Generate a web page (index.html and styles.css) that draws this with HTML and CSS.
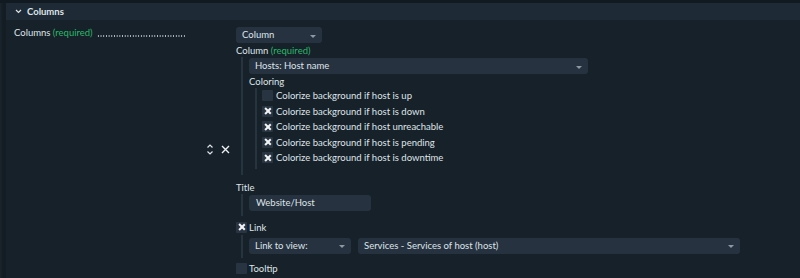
FILE: index.html
```html
<!DOCTYPE html>
<html>
<head>
<meta charset="utf-8">
<link rel="stylesheet" href="styles.css">
</head>
<body>
<div class="page">
  <div class="edge"></div>
  <div class="main">
    <div class="topband"></div>
    <div class="header">
      <svg class="chev" width="7" height="5" viewBox="0 0 7 5"><path d="M1 1 L3.5 3.5 L6 1" fill="none" stroke="#dfe4e8" stroke-width="1.2"/></svg>
      <span class="htitle">Columns</span>
    </div>
    <div class="content">
      <div class="label"><span>Columns <span class="req">(required)</span></span><span class="dots"></span></div>
      <div class="right">
        <div class="select sel-column"><span>Column</span><i class="arrow"></i></div>
        <div class="entryrow">
          <div class="icons">
            <svg width="8" height="11" viewBox="0 0 8 11"><path d="M1.5 3.5 L4 1 L6.5 3.5 M1.5 7.5 L4 10 L6.5 7.5" fill="none" stroke="#dfe4e8" stroke-width="1.2"/></svg>
            <svg width="9" height="9" viewBox="0 0 9 9"><path d="M1 1 L8 8 M8 1 L1 8" fill="none" stroke="#eef1f3" stroke-width="1.4"/></svg>
          </div>
          <div class="entry">
            <div class="title">Column <span class="req">(required)</span></div>
            <div class="block b1">
              <div class="select sel-hosts"><span>Hosts: Host name</span><i class="arrow"></i></div>
              <div class="sub">Coloring</div>
              <div class="block b2">
                <div class="cbrow"><span class="cb"></span>Colorize background if host is up</div>
                <div class="cbrow"><span class="cb on"></span>Colorize background if host is down</div>
                <div class="cbrow"><span class="cb on"></span>Colorize background if host unreachable</div>
                <div class="cbrow"><span class="cb on"></span>Colorize background if host is pending</div>
                <div class="cbrow"><span class="cb on"></span>Colorize background if host is downtime</div>
              </div>
            </div>
            <div class="title t2">Title</div>
            <div class="block b3">
              <div class="input">Website/Host</div>
            </div>
            <div class="cbline t3"><span class="cb on"></span>Link</div>
            <div class="block b4">
              <div class="select sel-link"><span>Link to view:</span><i class="arrow"></i></div>
              <div class="select sel-view"><span>Services - Services of host (host)</span><i class="arrow"></i></div>
            </div>
            <div class="cbline t4"><span class="cb"></span>Tooltip</div>
          </div>
        </div>
      </div>
    </div>
  </div>
</div>
</body>
</html>
```

FILE: styles.css
```css
* { box-sizing: border-box; }
html, body { margin: 0; padding: 0; }
body {
  background: #17212a;
  font-family: Lato, "Noto Sans", sans-serif;
  font-size: 9.5px;
  color: #dfe4e8;
  width: 800px;
  height: 278px;
  overflow: hidden;
}
.page { display: flex; height: 278px; }
.edge {
  width: 6px;
  flex: none;
  background: linear-gradient(to right, #1a252e 0, #131c23 3px, #141d24 6px);
}
.main { flex: 1; display: flex; flex-direction: column; }
.topband { height: 3px; background: #111a21; margin-left: -6px; }
.header {
  height: 17px;
  background: #1e2b36;
  display: flex;
  align-items: center;
  padding-left: 9px;
}
.chev { margin-right: 5px; }
.htitle { font-weight: bold; font-size: 9.5px; }
.content { display: flex; padding-top: 6px; }
.label {
  width: 172px;
  flex: none;
  margin-left: 8px;
  margin-right: 14px;
  line-height: 13px;
  height: 13px;
  white-space: nowrap;
  display: flex;
}
.req { color: #27b868; }
.dots {
  flex: 1;
  margin-left: 4px;
  height: 13px;
  background-image: radial-gradient(circle, #b9c1c8 0.55px, transparent 0.8px);
  background-size: 2.7px 2px;
  background-repeat: repeat-x;
  background-position: 0 9px;
}
.right { display: flex; flex-direction: column; }
.select {
  height: 16px;
  background: #263240;
  border-radius: 3px;
  display: flex;
  align-items: center;
  justify-content: space-between;
  padding: 0 6px;
  line-height: 16px;
}
.arrow {
  width: 0; height: 0;
  border-left: 3px solid transparent;
  border-right: 3px solid transparent;
  border-top: 3px solid #8d98a4;
  margin-top: 2px;
}
.sel-column { width: 86px; margin-left: 36px; margin-top: 1px; }
.entryrow { display: flex; }
.icons {
  width: 36px;
  flex: none;
  display: flex;
  align-items: center;
  gap: 7px;
  padding-left: 6px;
  padding-top: 101px;
  align-self: flex-start;
}
.entry { display: flex; flex-direction: column; }
.title { line-height: 13px; margin-top: 1px; }
.block {
  margin-left: 5px;
  border-left: 2px solid #27333f;
  padding-left: 6px;
}
.b1 { padding-top: 1px; padding-bottom: 6px; }
.sel-hosts { width: 339px; }
.sub { line-height: 12px; margin-top: 2px; }
.b2 { margin-left: 6px; padding-left: 5px; padding-bottom: 3px; }
.cbrow { height: 15.5px; display: flex; align-items: center; white-space: nowrap; }
.cb {
  width: 11px; height: 11px;
  background: #283441;
  border-radius: 1px;
  margin-right: 3px;
  flex: none;
  position: relative;
}
.cb.on::before, .cb.on::after {
  content: "";
  position: absolute;
  left: 5px; top: 1.5px;
  width: 1.6px; height: 8px;
  background: #f1f3f5;
  transform: rotate(45deg);
}
.cb.on::after { transform: rotate(-45deg); }
.t2 { margin-top: 6px; }
.b3 { padding-top: 1px; padding-bottom: 5px; }
.input {
  width: 122px; height: 16px;
  background: #263240;
  border-radius: 3px;
  padding-left: 7px;
  line-height: 16px;
}
.cbline { display: flex; align-items: center; height: 13px; }
.cbline .cb { margin-right: 2px; }
.t3 { margin-top: 5px; }
.b4 { display: flex; gap: 7px; padding-top: 3px; padding-bottom: 4px; margin-top: 1px; }
.sel-link { width: 102px; }
.sel-view { width: 382px; }
.t4 { margin-top: 4px; }
```
